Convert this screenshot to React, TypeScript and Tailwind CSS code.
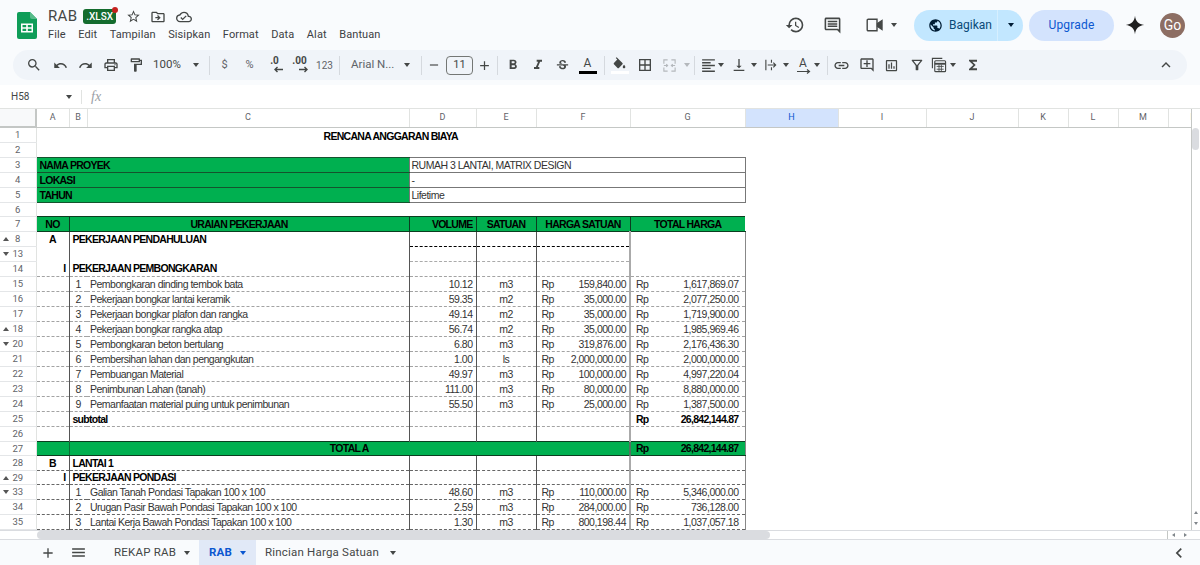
import type { ReactNode } from "react";
import {
  MdBorderAll,
  MdFormatAlignLeft,
  MdFormatBold,
  MdFormatItalic,
  MdHistory,
  MdKeyboardArrowLeft,
  MdKeyboardArrowUp,
  MdLink,
  MdMenu,
  MdOutlineAddComment,
  MdOutlineCloudDone,
  MdOutlineComment,
  MdOutlineDriveFileMove,
  MdOutlineFilterAlt,
  MdOutlineFormatPaint,
  MdOutlineFunctions,
  MdOutlineInsertChart,
  MdOutlinePrint,
  MdOutlineSearch,
  MdOutlineStarBorder,
  MdAdd,
  MdPublic,
  MdRedo,
  MdRemove,
  MdStrikethroughS,
  MdUndo,
  MdVerticalAlignBottom,
} from "react-icons/md";

const menuItems = ["File", "Edit", "Tampilan", "Sisipkan", "Format", "Data", "Alat", "Bantuan"];

const columns = [
  { name: "A", width: "w-[33px]" },
  { name: "B", width: "w-[18px]" },
  { name: "C", width: "w-[322px]" },
  { name: "D", width: "w-[67px]" },
  { name: "E", width: "w-[60px]" },
  { name: "F", width: "w-[94px]" },
  { name: "G", width: "w-[115px]" },
  { name: "H", width: "w-[93px]" },
  { name: "I", width: "w-[88px]" },
  { name: "J", width: "w-[92px]" },
  { name: "K", width: "w-[50px]" },
  { name: "L", width: "w-[50px]" },
  { name: "M", width: "w-[50px]" },
  { name: "N", width: "w-[24px]" },
];

// no Arial Narrow here, so squeeze Liberation Sans to the same widths
const cellFont = "font-['Liberation_Sans',sans-serif] text-[10.5px] leading-[13px] tracking-[-0.5px]";
const boldCell = "font-bold tracking-[-0.72px] text-black";
const dash = "border-b border-b-[#666] [border-bottom-style:dashed]!";
const dashLight = "border-b border-b-[#a3a3a3] [border-bottom-style:dashed]!";
const lineB = "border-l border-l-[#555]";
const lineG = "border-l-2 border-l-[#aaa]";
const lineEnd = "border-r border-r-[#888]";

const demolition = [
  [15, "1", "Pembongkaran dinding tembok bata", "10.12", "m3", "159,840.00", "1,617,869.07"],
  [16, "2", "Pekerjaan bongkar lantai keramik", "59.35", "m2", "35,000.00", "2,077,250.00"],
  [17, "3", "Pekerjaan bongkar plafon dan rangka", "49.14", "m2", "35,000.00", "1,719,900.00"],
  [18, "4", "Pekerjaan bongkar rangka atap", "56.74", "m2", "35,000.00", "1,985,969.46"],
  [20, "5", "Pembongkaran beton bertulang", "6.80", "m3", "319,876.00", "2,176,436.30"],
  [21, "6", "Pembersihan lahan dan pengangkutan", "1.00", "ls", "2,000,000.00", "2,000,000.00"],
  [22, "7", "Pembuangan Material", "49.97", "m3", "100,000.00", "4,997,220.04"],
  [23, "8", "Penimbunan Lahan (tanah)", "111.00", "m3", "80,000.00", "8,880,000.00"],
  [24, "9", "Pemanfaatan material puing untuk penimbunan", "55.50", "m3", "25,000.00", "1,387,500.00"],
] as const;

const foundation = [
  [33, "1", "Galian Tanah Pondasi Tapakan 100 x 100", "48.60", "m3", "110,000.00", "5,346,000.00"],
  [34, "2", "Urugan Pasir Bawah Pondasi Tapakan 100 x 100", "2.59", "m3", "284,000.00", "736,128.00"],
  [35, "3", "Lantai Kerja Bawah Pondasi Tapakan 100 x 100", "1.30", "m3", "800,198.44", "1,037,057.18"],
] as const;

function Caret({ color = "border-t-[#444746]" }: { color?: string }) {
  return <span className={`h-0 w-0 shrink-0 border-x-[3.5px] border-t-[4px] border-x-transparent ${color}`} />;
}

function Tool({ children, className = "w-[25px]" }: { children: ReactNode; className?: string }) {
  return <div className={`flex h-full shrink-0 items-center justify-center text-[#444746] ${className}`}>{children}</div>;
}

function Sep({ className = "" }: { className?: string }) {
  return <div className={`h-[19px] w-px shrink-0 bg-[#d5d9de] ${className}`} />;
}

function SheetsLogo() {
  return (
    <svg width="20" height="27" viewBox="0 0 20 27" className="shrink-0">
      <path d="M2 0H13L20 7V25a2 2 0 0 1-2 2H2a2 2 0 0 1-2-2V2a2 2 0 0 1 2-2Z" fill="#0f9d58" />
      <path d="M13 0L20 7H15a2 2 0 0 1-2-2Z" fill="#57bb8a" />
      <path
        d="M4 11.5H16V20.5H4ZM5.5 13V15.2H9.2V13ZM10.8 13V15.2H14.5V13ZM5.5 16.8V19H9.2V16.8ZM10.8 16.8V19H14.5V16.8Z"
        fill="#fff"
        fillRule="evenodd"
      />
    </svg>
  );
}

function DecimalIcon({ label, plus }: { label: string; plus?: boolean }) {
  return (
    <div className="relative flex h-[20px] w-[22px] flex-col items-center font-['Roboto',sans-serif] text-[10px] font-bold leading-[11px] text-[#444746]">
      <span>{label}</span>
      <svg width="10" height="8" viewBox="0 0 10 8" className="ml-[8px]">
        {plus ? (
          <path d="M0 3.5H8M5.5 1L8 3.5L5.5 6" fill="none" stroke="#444746" strokeWidth="1.4" />
        ) : (
          <path d="M9 3.5H1M3.5 1L1 3.5L3.5 6" fill="none" stroke="#444746" strokeWidth="1.4" />
        )}
      </svg>
    </div>
  );
}

function TextColorIcon() {
  return (
    <div className="flex flex-col items-center">
      <span className="font-['Roboto',sans-serif] text-[12px] leading-[13px] text-[#444746]">A</span>
      <span className="mt-[1px] h-[3px] w-[18px] bg-black" />
    </div>
  );
}

function FillIcon() {
  return (
    <div className="flex flex-col items-center">
      <svg width="13" height="12" viewBox="2 0 20 18">
        <path
          d="M16.56 8.94L7.62 0 6.21 1.41l2.38 2.38-5.15 5.15c-.59.59-.59 1.54 0 2.12l5.5 5.5c.29.29.68.44 1.06.44s.77-.15 1.06-.44l5.5-5.5c.59-.58.59-1.53 0-2.12zM19 11.5s-2 2.17-2 3.5c0 1.1.9 2 2 2s2-.9 2-2c0-1.33-2-3.5-2-3.5z"
          fill="#444746"
        />
      </svg>
      <span className="mt-[2px] h-[3px] w-[18px] bg-white" />
    </div>
  );
}

function MergeIcon() {
  return (
    <svg width="15" height="15" viewBox="0 0 16 16" fill="none" stroke="#b4b8bc" strokeWidth="1.2">
      <path d="M6 2H2V6M6 14H2V10M10 2H14V6M10 14H14V10M2 8H6M4.5 6.5L6 8L4.5 9.5M14 8H10M11.5 6.5L10 8L11.5 9.5" />
    </svg>
  );
}

function WrapIcon() {
  return (
    <svg width="14" height="14" viewBox="0 0 15 15" fill="none" stroke="#444746" strokeWidth="1.2">
      <path d="M2 2V13M8 2V5M8 10V13M4 7.5H12.5M10 5L12.5 7.5L10 10" />
    </svg>
  );
}

function RotateIcon() {
  return (
    <div className="flex flex-col items-center">
      <span className="font-['Roboto',sans-serif] text-[12px] leading-[12px] text-[#444746]">A</span>
      <svg width="15" height="5" viewBox="0 0 15 5" fill="none" stroke="#444746" strokeWidth="1.2">
        <path d="M1 2.5H13M11 .5L13.5 2.5L11 4.5" />
      </svg>
    </div>
  );
}

function CalcIcon() {
  return (
    <svg width="16" height="16" viewBox="0 0 17 17" fill="none" stroke="#444746" strokeWidth="1.2">
      <path d="M1.5 12V1.5H12" />
      <rect x="4" y="4" width="11.5" height="11.5" rx="1" />
      <path d="M4 7.2H15.5" strokeWidth="2" />
      <path d="M6 10H13.5M6 13H13.5M8.5 8V15M11 8V15" strokeWidth=".9" />
    </svg>
  );
}

function VideoIcon() {
  return (
    <svg width="17" height="14" viewBox="0 0 17 14" fill="none" stroke="#444746" strokeWidth="1.4">
      <path d="M2.2 1.2H11V12.8H2.2a1 1 0 0 1-1-1V2.2a1 1 0 0 1 1-1Z" />
      <path d="M11.5 5.5L16 2.5V11.5L11.5 8.5Z" fill="#444746" />
    </svg>
  );
}

function GeminiSpark() {
  return (
    <svg width="20" height="20" viewBox="0 0 24 24">
      <path d="M12 1C12.7 7.6 16.4 11.3 23 12C16.4 12.7 12.7 16.4 12 23C11.3 16.4 7.6 12.7 1 12C7.6 11.3 11.3 7.6 12 1Z" fill="#1f1f1f" />
    </svg>
  );
}

function TopBar() {
  return (
    <header className="flex h-[50px] shrink-0 items-center pl-[17px] pr-[15px] font-['Roboto',sans-serif]">
      <SheetsLogo />
      <div className="ml-[11px] flex flex-col pb-[4px]">
        <div className="flex h-[24px] items-center">
          <span className="text-[15px] tracking-[0.3px] text-[#444746]">RAB</span>
          <span className="relative ml-[6px] rounded-[3px] bg-[#146c2e] px-[3px] py-[1px] text-[10px] font-medium leading-[13px] text-white">
            .XLSX
            <span className="absolute -right-[2px] -top-[2px] h-[6px] w-[6px] rounded-full bg-[#c5221f]" />
          </span>
          <MdOutlineStarBorder className="ml-[10px] text-[#444746]" size={15} />
          <MdOutlineDriveFileMove className="ml-[9px] text-[#444746]" size={16} />
          <MdOutlineCloudDone className="ml-[10px] text-[#444746]" size={16} />
        </div>
        <nav className="flex h-[13px] items-center gap-[12.5px] text-[11px] tracking-[0.1px] text-[#3c4043]">
          {menuItems.map((item) => (
            <span key={item}>{item}</span>
          ))}
        </nav>
      </div>
      <div className="ml-auto flex items-center">
        <MdHistory className="text-[#444746]" size={20} />
        <MdOutlineComment className="ml-[18px] text-[#444746]" size={19} />
        <span className="ml-[24px] flex"><VideoIcon /></span>
        <span className="ml-[8px] flex">
          <Caret />
        </span>
        <div className="ml-[17px] flex h-[31px] w-[109px] items-center rounded-full bg-[#c2e7ff] text-[12px] text-[#0a4a78]">
          <MdPublic className="ml-[14px] text-[#001d35]" size={15} />
          <span className="ml-[6px]">Bagikan</span>
          <span className="ml-auto flex h-full w-[26px] items-center justify-center border-l border-l-[#d6efff]">
            <Caret color="border-t-[#001d35]" />
          </span>
        </div>
        <div className="ml-[6px] flex h-[31px] w-[85px] items-center justify-center rounded-full bg-[#d3e3fd] text-[12px] tracking-[0.2px] text-[#0b57d0]">
          Upgrade
        </div>
        <span className="ml-[11px] flex">
          <GeminiSpark />
        </span>
        <div className="ml-[15px] flex h-[25px] w-[25px] items-center justify-center rounded-full bg-[#8d6e63] text-[14px] text-white">
          Go
        </div>
      </div>
    </header>
  );
}

function Toolbar() {
  return (
    <div className="mx-[13px] flex h-[30px] shrink-0 items-center rounded-full bg-[#f0f4f9] pl-[8px] font-['Roboto',sans-serif] text-[#444746]">
      <Tool><MdOutlineSearch size={16} /></Tool>
      <Tool className="ml-[2px] w-[25px]"><MdUndo size={15} /></Tool>
      <Tool><MdRedo size={15} /></Tool>
      <Tool><MdOutlinePrint size={16} /></Tool>
      <Tool><MdOutlineFormatPaint size={16} /></Tool>
      <span className="ml-[5px] w-[33px] shrink-0 text-[11.5px]">100%</span>
      <Tool className="w-[20px]"><Caret /></Tool>
      <Sep className="ml-[3px]" />
      <Tool className="ml-[2px] w-[25px] text-[11px]"><span className="text-[#5f6368]">$</span></Tool>
      <Tool className="w-[25px] text-[11px]"><span className="text-[#5f6368]">%</span></Tool>
      <Tool><DecimalIcon label=".0" /></Tool>
      <Tool><DecimalIcon label=".00" plus /></Tool>
      <Tool className="w-[25px] text-[10px]"><span className="text-[#5f6368]">123</span></Tool>
      <Sep className="ml-[2px]" />
      <span className="ml-[11px] w-[46px] shrink-0 text-[11.5px] text-[#5f6368]">Arial N...</span>
      <Tool className="w-[20px]"><Caret /></Tool>
      <Sep className="ml-[4px]" />
      <Tool className="w-[24px]"><MdRemove size={14} /></Tool>
      <div className="flex h-[19px] w-[27px] shrink-0 items-center justify-center rounded-[4px] border border-[#747775] text-[11px] text-[#444746]">11</div>
      <Tool className="w-[22px]"><MdAdd size={15} /></Tool>
      <Sep className="ml-[2px]" />
      <Tool className="ml-[2px] w-[25px]"><MdFormatBold size={16} /></Tool>
      <Tool><MdFormatItalic size={16} /></Tool>
      <Tool><MdStrikethroughS size={15} /></Tool>
      <Tool><TextColorIcon /></Tool>
      <Sep className="ml-[4px]" />
      <Tool className="ml-[2px] w-[25px]"><FillIcon /></Tool>
      <Tool><MdBorderAll size={16} /></Tool>
      <Tool><MergeIcon /></Tool>
      <Tool className="w-[10px]"><Caret color="border-t-[#b4b8bc]" /></Tool>
      <Sep className="ml-[2px]" />
      <Tool className="ml-[3px] w-[20px]"><MdFormatAlignLeft size={17} /></Tool>
      <Tool className="w-[6px]"><Caret /></Tool>
      <Tool className="ml-[5px] w-[20px]"><MdVerticalAlignBottom size={16} /></Tool>
      <Tool className="w-[10px]"><Caret /></Tool>
      <Tool className="ml-[2px] w-[20px]"><WrapIcon /></Tool>
      <Tool className="w-[10px]"><Caret /></Tool>
      <Tool className="ml-[2px] w-[20px]"><RotateIcon /></Tool>
      <Tool className="w-[8px]"><Caret /></Tool>
      <Sep className="ml-[6px]" />
      <Tool className="ml-[1px] w-[25px]"><MdLink size={17} /></Tool>
      <Tool><MdOutlineAddComment size={16} /></Tool>
      <Tool><MdOutlineInsertChart size={15} /></Tool>
      <Tool><MdOutlineFilterAlt size={16} /></Tool>
      <Tool className="w-[20px]"><CalcIcon /></Tool>
      <Tool className="w-[8px]"><Caret /></Tool>
      <Tool className="ml-[3px] w-[25px]"><MdOutlineFunctions size={16} /></Tool>
      <Tool className="ml-auto mr-[9px] w-[25px]"><MdKeyboardArrowUp size={18} /></Tool>
    </div>
  );
}

function FormulaBar() {
  return (
    <div className="mt-[5px] flex h-[24px] shrink-0 items-center border-b border-b-[#e1e3e1] bg-white font-['Roboto',sans-serif] text-[#444746]">
      <span className="ml-[11px] w-[55px] text-[10px]">H58</span>
      <Caret />
      <span className="ml-[9px] h-[14px] w-px bg-[#e1e3e1]" />
      <span className="ml-[9px] font-['Liberation_Serif',serif] text-[14px] italic text-[#9aa0a6]">fx</span>
    </div>
  );
}

function RowHead({ n, mark }: { n: number; mark?: "up" | "down" }) {
  return (
    <td className="relative border-b border-r border-b-[#e4e6e8] border-r-[#e1e3e1] bg-white p-0 text-center font-['Roboto',sans-serif] text-[9.5px] font-normal leading-[12px] tracking-normal text-[#5f6368]">
      {mark && (
        <span
          className={`absolute left-[3px] top-[5px] h-0 w-0 border-x-[3px] border-x-transparent ${
            mark === "up" ? "border-b-[4px] border-b-[#555]" : "border-t-[4px] border-t-[#555]"
          }`}
        />
      )}
      {n}
    </td>
  );
}

function Money({ value, bold, right }: { value: string; bold?: boolean; right: string }) {
  return (
    <div className={`flex justify-between pl-[5px] ${right} ${bold ? boldCell : ""}`}>
      <span>Rp</span>
      <span>{value}</span>
    </div>
  );
}

type ItemRowProps = {
  n: number;
  no: string;
  label: string;
  volume: string;
  unit: string;
  price: string;
  total: string;
  mark?: "up" | "down";
  border: string;
};

function ItemRow({ n, no, label, volume, unit, price, total, mark, border }: ItemRowProps) {
  return (
    <tr className="h-[15px]">
      <RowHead n={n} mark={mark} />
      <td className={`p-0 ${border}`} />
      <td className={`p-0 text-center ${border} ${lineB}`}>{no}</td>
      <td className={`overflow-hidden whitespace-nowrap p-0 pl-[3px] ${border}`}>{label}</td>
      <td className={`p-0 pr-[3px] text-right ${border} ${lineB}`}>{volume}</td>
      <td className={`p-0 text-center ${border} ${lineB}`}>{unit}</td>
      <td className={`p-0 ${border} ${lineB}`}><Money value={price} right="pr-[3px]" /></td>
      <td className={`p-0 ${border} ${lineG} ${lineEnd}`}><Money value={total} right="pr-[6px]" /></td>
    </tr>
  );
}

function SectionRow({ n, no, label, noRight, mark, height = "h-[15px]", border = dash }: {
  n: number;
  no?: string;
  label?: string;
  noRight?: boolean;
  mark?: "up" | "down";
  height?: string;
  border?: string;
}) {
  return (
    <tr className={height}>
      <RowHead n={n} mark={mark} />
      <td className={`p-0 ${boldCell} ${noRight ? "pr-[3px] text-right" : "text-center"} ${border}`}>{no}</td>
      <td colSpan={2} className={`overflow-hidden whitespace-nowrap p-0 pl-[3px] ${boldCell} ${border} ${lineB}`}>{label}</td>
      <td className={`p-0 ${border} ${lineB}`} />
      <td className={`p-0 ${border} ${lineB}`} />
      <td className={`p-0 ${border} ${lineB}`} />
      <td className={`p-0 ${border} ${lineG} ${lineEnd}`} />
    </tr>
  );
}

function InfoRow({ n, label, value }: { n: number; label: string; value: string }) {
  return (
    <tr className="h-[15px]">
      <RowHead n={n} />
      <td colSpan={3} className={`border-y border-y-[#14532d] bg-[#00b050] p-0 pl-[3px] pt-[1px] ${boldCell}`}>{label}</td>
      <td colSpan={4} className="border border-[#777] p-0 pl-[2px] pt-[1px]">{value}</td>
    </tr>
  );
}

function SheetTable() {
  const green = `border-y border-y-[#0b3d20] bg-[#00b050] p-0 ${boldCell}`;
  return (
    <table className={`w-[1192px] table-fixed text-[#333] ${cellFont}`}>
      <colgroup>
        <col className="w-[36px]" />
        {columns.map((col) => (
          <col key={col.name} className={col.width} />
        ))}
      </colgroup>
      <thead>
        <tr className="h-[18px] font-['Roboto',sans-serif] text-[9px] tracking-normal text-[#5f6368]">
          <th className="border-b-2 border-r-2 border-b-[#c4c7c5] border-r-[#c4c7c5] bg-[#f8f9fa] p-0" />
          {columns.map((col) => (
            <th
              key={col.name}
              className={`overflow-hidden border-b border-r border-b-[#c4c7c5] border-r-[#e1e3e1] p-0 font-normal ${
                col.name === "H" ? "bg-[#d3e3fd] font-bold text-[#0b57d0]" : ""
              } ${col.name === "N" ? "pl-[22px] text-left" : ""}`}
            >
              {col.name}
            </th>
          ))}
        </tr>
      </thead>
      <tbody>
        <tr className="h-[15px]">
          <RowHead n={1} />
          <td colSpan={7} className={`p-0 pt-[2px] text-center ${boldCell}`}>RENCANA ANGGARAN BIAYA</td>
        </tr>
        <tr className="h-[15px]"><RowHead n={2} /><td colSpan={7} className="p-0" /></tr>
        <InfoRow n={3} label="NAMA PROYEK" value="RUMAH 3 LANTAI, MATRIX DESIGN" />
        <InfoRow n={4} label="LOKASI" value="-" />
        <InfoRow n={5} label="TAHUN" value="Lifetime" />
        <tr className="h-[14px]"><RowHead n={6} /><td colSpan={7} className="p-0" /></tr>
        <tr className="h-[15px]">
          <RowHead n={7} />
          <td className={`${green} text-center`}>NO</td>
          <td colSpan={2} className={`${green} border-l border-l-[#0b3d20] text-center`}>URAIAN PEKERJAAN</td>
          <td className={`${green} border-l border-l-[#0b3d20] pr-[3px] text-right`}>VOLUME</td>
          <td className={`${green} border-l border-l-[#0b3d20] text-center`}>SATUAN</td>
          <td className={`${green} border-l border-l-[#0b3d20] text-center`}>HARGA SATUAN</td>
          <td className={`${green} border-l border-l-[#0b3d20] text-center`}>TOTAL HARGA</td>
        </tr>
        <tr className="h-[15px]">
          <RowHead n={8} mark="up" />
          <td className={`p-0 text-center ${boldCell}`}>A</td>
          <td colSpan={2} className={`whitespace-nowrap p-0 pl-[3px] ${boldCell} ${lineB}`}>PEKERJAAN PENDAHULUAN</td>
          <td className={`border-b border-b-black p-0 [border-bottom-style:dashed]! ${lineB}`} />
          <td className={`border-b border-b-black p-0 [border-bottom-style:dashed]! ${lineB}`} />
          <td className={`border-b border-b-black p-0 [border-bottom-style:dashed]! ${lineB}`} />
          <td className={`p-0 ${lineG} ${lineEnd}`} />
        </tr>
        <tr className="h-[15px]">
          <RowHead n={13} mark="down" />
          <td className="p-0" />
          <td colSpan={2} className={`p-0 ${lineB}`} />
          <td className={`border-b border-b-[#aaa] p-0 [border-bottom-style:dashed]! ${lineB}`} />
          <td className={`border-b border-b-[#aaa] p-0 [border-bottom-style:dashed]! ${lineB}`} />
          <td className={`border-b border-b-[#aaa] p-0 [border-bottom-style:dashed]! ${lineB}`} />
          <td className={`p-0 ${lineG} ${lineEnd}`} />
        </tr>
        <SectionRow n={14} no="I" noRight label="PEKERJAAN PEMBONGKARAN" border={dashLight} />
        {demolition.map(([n, no, label, volume, unit, price, total]) => (
          <ItemRow
            key={n}
            n={n}
            no={no}
            label={label}
            volume={volume}
            unit={unit}
            price={price}
            total={total}
            border={dashLight}
            mark={n === 18 ? "up" : n === 20 ? "down" : undefined}
          />
        ))}
        <tr className="h-[15px]">
          <RowHead n={25} />
          <td className={`p-0 ${dashLight}`} />
          <td colSpan={2} className={`p-0 pl-[3px] ${boldCell} ${dashLight} ${lineB}`}>subtotal</td>
          <td className={`p-0 ${dashLight} ${lineB}`} />
          <td className={`p-0 ${dashLight} ${lineB}`} />
          <td className={`p-0 ${dashLight} ${lineB}`} />
          <td className={`p-0 ${dashLight} ${lineG} ${lineEnd}`}><Money value="26,842,144.87" bold right="pr-[6px]" /></td>
        </tr>
        <SectionRow n={26} border="" />
        <tr className="h-[14px]">
          <RowHead n={27} />
          <td className={green} />
          <td colSpan={5} className={`${green} border-l border-l-[#0b6b34] text-center`}>TOTAL A</td>
          <td className={`${green} border-l-2 border-l-[#55715f] ${lineEnd}`}><Money value="26,842,144.87" bold right="pr-[6px]" /></td>
        </tr>
        <SectionRow n={28} no="B" label="LANTAI 1" />
        <SectionRow n={29} no="I" noRight label="PEKERJAAN PONDASI" mark="up" height="h-[14px]" />
        {foundation.map(([n, no, label, volume, unit, price, total]) => (
          <ItemRow
            key={n}
            n={n}
            no={no}
            label={label}
            volume={volume}
            unit={unit}
            price={price}
            total={total}
            border={dash}
            mark={n === 33 ? "down" : undefined}
          />
        ))}
      </tbody>
    </table>
  );
}

function SheetGrid() {
  return (
    <div className="flex min-h-0 flex-1 bg-white">
      <div className="w-[1192px] shrink-0 overflow-hidden border-r border-r-[#c4c7c5]">
        <SheetTable />
      </div>
      <div className="flex w-[8px] flex-col pt-[19px]">
        <div className="h-[22px] w-[7px] rounded-full bg-[#dadce0]" />
        <div className="mt-auto flex flex-col items-center gap-[8px] pb-[5px]">
          <span className="h-0 w-0 border-x-[2px] border-b-[3px] border-x-transparent border-b-[#80868b]" />
          <span className="h-0 w-0 border-x-[2px] border-t-[3px] border-x-transparent border-t-[#80868b]" />
        </div>
      </div>
    </div>
  );
}

function HorizontalScroll() {
  return (
    <div className="flex h-[10px] shrink-0 items-center border-y border-y-[#dadce0] bg-white">
      <div className="ml-[37px] h-[8px] w-[733px] rounded-full bg-[#dadce0]" />
      <div className="ml-auto flex h-full w-[33px] items-center justify-around border-l border-l-[#c4c7c5] pr-[9px]">
        <span className="h-0 w-0 border-y-[2px] border-r-[3px] border-y-transparent border-r-[#80868b]" />
        <span className="h-0 w-0 border-y-[2px] border-l-[3px] border-y-transparent border-l-[#80868b]" />
      </div>
    </div>
  );
}

function SheetTabs() {
  return (
    <footer className="flex h-[25px] shrink-0 items-center font-['Roboto',sans-serif] text-[11.5px] tracking-[0.2px] text-[#444746]">
      <MdAdd className="ml-[40px]" size={16} />
      <MdMenu className="ml-[14px]" size={17} />
      <span className="ml-[27px] w-[61px] whitespace-nowrap">REKAP RAB</span>
      <span className="ml-[9px] flex"><Caret /></span>
      <div className="ml-[9px] flex h-full w-[57px] items-center bg-[#e1e9f7] pl-[10px] font-bold text-[#0b57d0]">
        RAB
        <span className="ml-[8px] flex"><Caret color="border-t-[#0b57d0]" /></span>
      </div>
      <span className="ml-[9px] w-[116px] whitespace-nowrap">Rincian Harga Satuan</span>
      <span className="ml-[9px] flex"><Caret /></span>
      <MdKeyboardArrowLeft className="ml-auto mr-[11px]" size={20} />
    </footer>
  );
}

export default function App() {
  return (
    <div className="flex h-screen w-full flex-col overflow-hidden bg-[#f9fbfd]">
      <TopBar />
      <Toolbar />
      <FormulaBar />
      <SheetGrid />
      <HorizontalScroll />
      <SheetTabs />
    </div>
  );
}
